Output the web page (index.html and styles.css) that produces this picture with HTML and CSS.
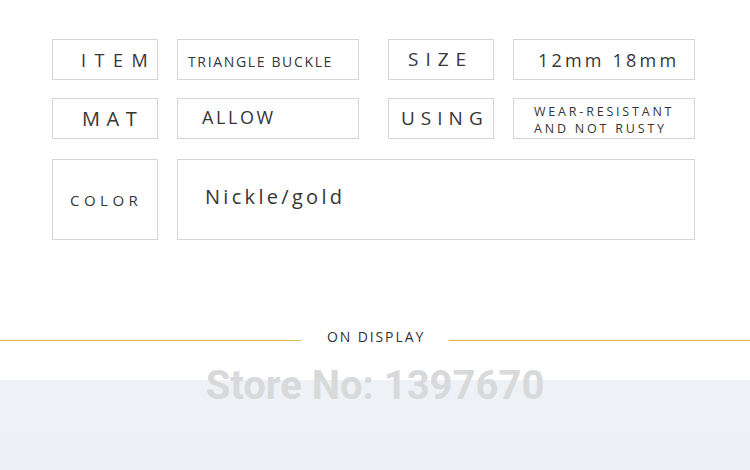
FILE: index.html
```html
<!DOCTYPE html>
<html lang="en">
<head>
<meta charset="utf-8">
<title>Triangle buckle specification</title>
<link rel="stylesheet" href="styles.css">
</head>
<body>
<div class="page">
  <div class="spec">
    <div class="spec-row">
      <div class="pair">
        <div class="cell label label-item">ITEM</div>
        <div class="cell value value-type">TRIANGLE BUCKLE</div>
      </div>
      <div class="pair">
        <div class="cell label label-size">SIZE</div>
        <div class="cell value value-size">12mm 18mm</div>
      </div>
    </div>
    <div class="spec-row">
      <div class="pair">
        <div class="cell label label-mat">MAT</div>
        <div class="cell value value-mat">ALLOW</div>
      </div>
      <div class="pair">
        <div class="cell label label-using">USING</div>
        <div class="cell value value-using">WEAR-RESISTANT<br>AND NOT RUSTY</div>
      </div>
    </div>
    <div class="spec-row spec-row-tall">
      <div class="cell label label-color">COLOR</div>
      <div class="cell value value-wide value-color">Nickle/gold</div>
    </div>
  </div>

  <div class="divider">
    <span class="divider-line"></span>
    <span class="divider-text">ON DISPLAY</span>
    <span class="divider-line"></span>
  </div>

  <div class="banner">
    <div class="store-no">Store No: 1397670</div>
  </div>
</div>
</body>
</html>
```

FILE: styles.css
```css
html, body {
  margin: 0;
  padding: 0;
  background: #ffffff;
}

.page {
  width: 750px;
  height: 470px;
  overflow: hidden;
  font-family: "Open Sans", "Noto Sans", sans-serif;
  color: #363636;
}

.spec {
  width: 643px;
  padding: 39px 0 0 52px;
  display: flex;
  flex-direction: column;
  gap: 18px;
}

.spec-row {
  display: flex;
  justify-content: space-between;
  height: 41px;
}

.spec-row-tall {
  height: 81px;
  margin-top: 2px;
  justify-content: flex-start;
  gap: 19px;
}

.pair {
  display: flex;
  gap: 19px;
}

.cell {
  box-sizing: border-box;
  border: 1px solid #d5d5d5;
  display: flex;
  align-items: center;
  white-space: nowrap;
  line-height: 1;
}

.label {
  width: 106px;
}

.value {
  width: 182px;
}

.value-wide {
  flex: 1;
}

.label-item {
  font-size: 18px;
  letter-spacing: 8.5px;
  padding: 1px 0 0 28px;
}

.value-type {
  font-size: 14px;
  letter-spacing: 1.65px;
  padding: 4px 0 0 10px;
}

.label-size {
  font-size: 19px;
  letter-spacing: 7px;
  padding: 0 0 0 19px;
}

.value-size {
  font-size: 18px;
  letter-spacing: 3.2px;
  padding: 0 0 0 24px;
}

.label-mat {
  font-size: 20px;
  letter-spacing: 6.5px;
  padding: 1px 0 0 29px;
}

.value-mat {
  font-size: 18px;
  letter-spacing: 2.6px;
  padding: 0 0 3px 24px;
}

.label-using {
  font-size: 19px;
  letter-spacing: 6px;
  padding: 0 0 0 12px;
}

.value-using {
  font-size: 12.5px;
  letter-spacing: 2.8px;
  line-height: 17px;
  padding: 2px 0 0 20px;
}

.label-color {
  font-size: 15px;
  letter-spacing: 4.5px;
  padding: 2px 0 0 17px;
}

.value-color {
  font-size: 20px;
  letter-spacing: 3.3px;
  padding: 0 0 6px 27px;
}

.divider {
  margin-top: 87px;
  height: 20px;
  display: flex;
  align-items: center;
}

.divider-line {
  flex: 1;
  height: 1px;
  margin-top: 6px;
  background: #dfb94b;
}

.divider-text {
  font-size: 14px;
  line-height: 20px;
  letter-spacing: 1.9px;
  padding: 0 24px 0 26px;
  color: #333333;
}

.banner {
  margin-top: 18px;
  height: 105px;
  background: linear-gradient(to bottom, #ffffff 0, #ffffff 15px, #eef1f5 15px, #edf1f5 100%);
  text-align: center;
}

.store-no {
  font-family: Roboto, "Liberation Sans", sans-serif;
  font-weight: 700;
  font-size: 40px;
  line-height: 41px;
  color: #d8d9db;
}
```
